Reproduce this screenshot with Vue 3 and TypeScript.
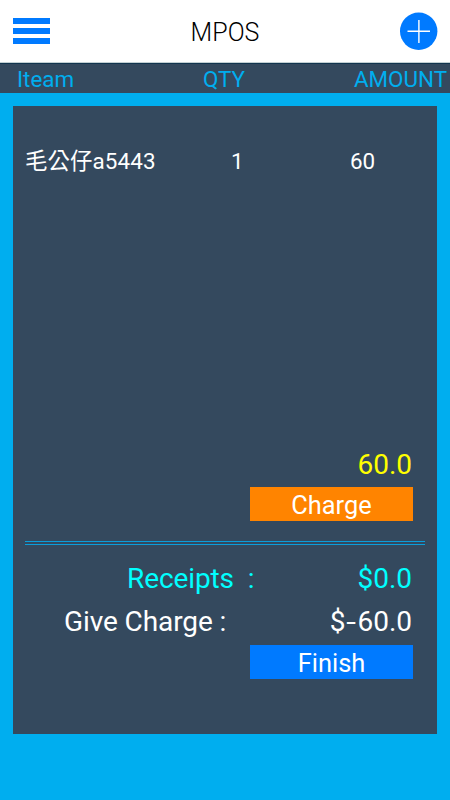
<script setup lang="ts">
interface Item { name: string; qty: number; amount: number }
const items: Item[] = [{ name: '毛公仔a5443', qty: 1, amount: 60 }]
</script>

<template>
  <div class="screen">
    <header class="bar">
      <svg class="menu" viewBox="0 0 37 26"><path d="M0 0h37v6H0zM0 10h37v6H0zM0 20h37v6H0z" fill="#007aff" /></svg>
      <h1>MPOS</h1>
      <svg class="add" viewBox="0 0 38 38"><circle cx="18.7" cy="19.2" r="18.7" fill="#007aff" /><path d="M18.9 8v23M7.5 19.3h22.5" stroke="#fff" stroke-width="1.4" /></svg>
    </header>
    <div class="heads"><span>Iteam</span><span>QTY</span><span>AMOUNT</span></div>
    <main class="panel">
      <section class="items">
        <div v-for="i in items" :key="i.name" class="item"><span class="name">{{ i.name }}</span><span>{{ i.qty }}</span><span>{{ i.amount }}</span></div>
      </section>
      <div class="total">60.0</div>
      <button class="charge">Charge</button>
      <div class="rule"></div>
      <div class="line receipts"><span class="label">Receipts&nbsp; :</span><span class="value">$0.0</span></div>
      <div class="line give"><span class="label">Give Charge :</span><span class="value">$<span class="minus">-</span>60.0</span></div>
      <button class="finish">Finish</button>
    </main>
  </div>
</template>

<style>
body { margin: 0; }
</style>
<style scoped>
.screen { width: 450px; height: 800px; background: #00aeef; font-family: Roboto, "Noto Sans CJK TC", sans-serif; overflow: hidden; }
.bar { height: 63px; background: #fff; display: flex; align-items: center; justify-content: space-between; padding: 0 12px 0 13px; box-sizing: border-box; border-bottom: 1px solid #c3d0d3; }
.menu { width: 37px; height: 26px; }
.add { width: 38px; height: 38px; }
h1 { margin: 2px 0 0; font-size: 25px; font-weight: 300; color: #000; }
.heads { height: 30px; background: #34495e; border-top: 1px solid #12354f; box-sizing: border-box; color: #00aeef; font-size: 22.4px; line-height: 31px; display: grid; grid-template-columns: 186px 150px 1fr; padding: 0 3px 0 17px; }
.heads span:last-child { text-align: right; }
.panel { margin: 13px 13px 0; height: 628px; background: #34495e; padding: 0 24px 0 12px; box-sizing: border-box; display: flex; flex-direction: column; align-items: flex-end; color: #fff; }
.items { width: 100%; height: 340px; padding-top: 38px; box-sizing: border-box; }
.item { display: grid; grid-template-columns: 206px 119px 1fr; font-size: 22.4px; line-height: 34px; }
.name { letter-spacing: 0.12px; }
.total { height: 41px; line-height: 37px; font-size: 28px; color: #ff0; padding-right: 1px; }
button { width: 163px; height: 34px; border: 0; padding: 0; color: #fff; font: inherit; font-size: 25.4px; line-height: 37px; flex: none; }
.charge { background: #ff8400; }
.finish { background: #007aff; }
.rule { width: 400px; height: 4px; box-sizing: border-box; border-top: 1px solid #0b9edb; border-bottom: 1px solid #0b9edb; margin: 20px -12px 15px 0; flex: none; }
.line { width: 100%; display: flex; justify-content: space-between; font-size: 28px; height: 43px; line-height: 38px; }
.receipts { color: #0ff; padding-left: 102px; box-sizing: border-box; }
.label { letter-spacing: -0.1px; }
.value { padding-right: 1px; }
.give { height: 42px; padding-left: 39px; box-sizing: border-box; }
.minus { display: inline-block; width: 12px; text-align: center; transform: scaleX(1.25); }
</style>
